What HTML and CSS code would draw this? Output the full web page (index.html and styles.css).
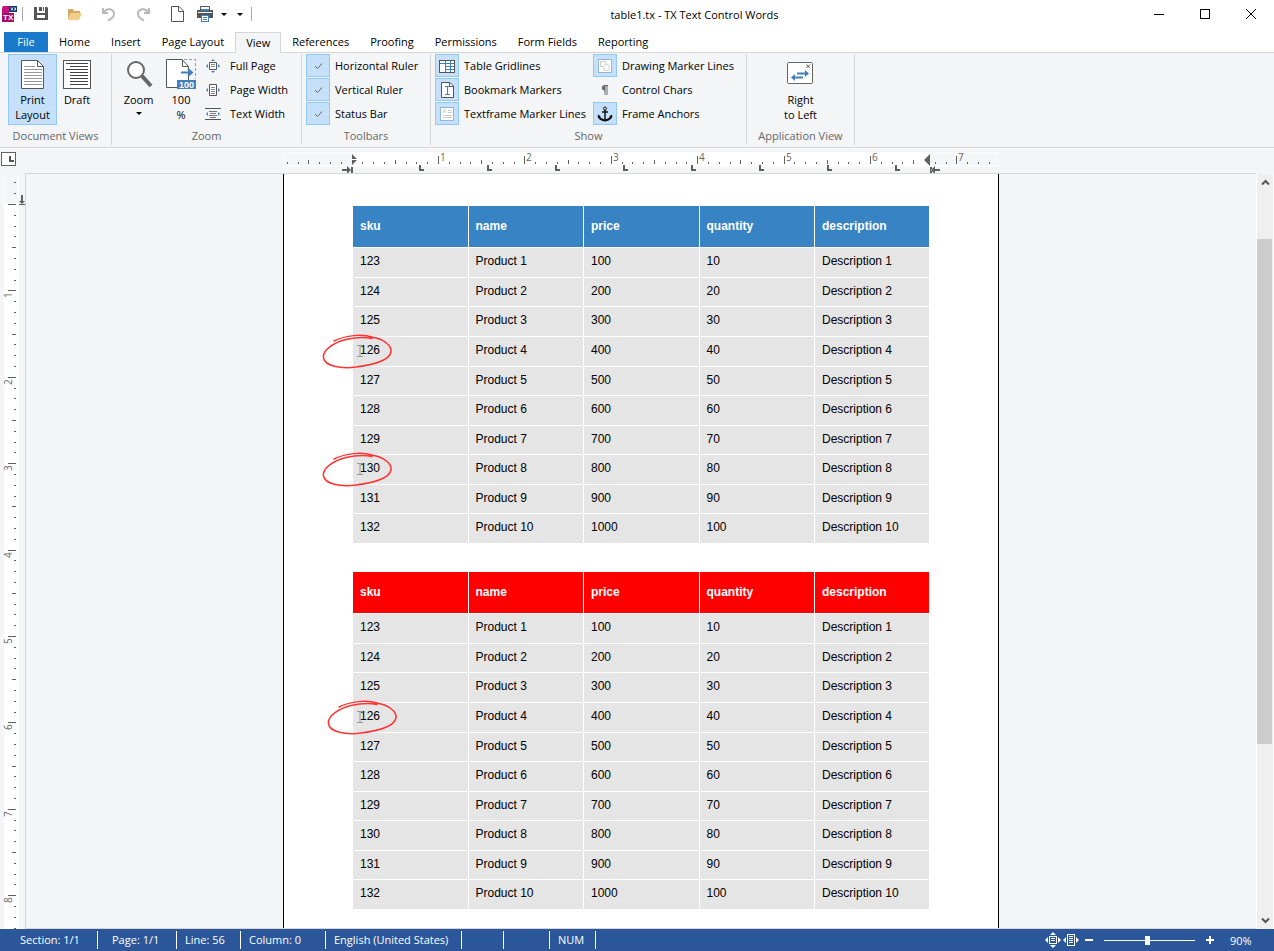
FILE: index.html
```
<!DOCTYPE html>
<html lang="en">

<head>
  <meta charset="UTF-8" />
  <meta name="viewport" content="width=device-width, initial-scale=1.0" />
  <title>table1.tx - TX Text Control Words</title>
  <link rel="stylesheet" href="styles.css">
</head>

<body>
  <header class="titlebar">
    <div class="quick-access">
      <svg class="app-icon" width="18" height="18" viewBox="0 0 18 18">
        <path d="M3 1H9V8H14V17H2V3Z" fill="#c4127f" />
        <path d="M2 8H14L12 17H2Z" fill="#a50d6b" />
        <rect x="9" y="1" width="8" height="6" fill="#14386b" />
        <path d="M11 2.500l2 3M13 2.500l-2 3M14 3h1.500v2H14" stroke="#fff" fill="none" stroke-width=".8" />
        <text x="3" y="15" class="app-icon-text">TX</text>
      </svg>
      <span class="divider"></span>
      <button class="quick" aria-label="Save">
        <svg width="16" height="16" viewBox="0 0 16 16">
          <path d="M1 1H4V7H12V1H14L15 2V14H1Z" fill="#555" />
          <path d="M6 1H9V5H6ZM10 1H11V5H10Z" fill="#555" />
          <path d="M4 9H12V12H4Z" fill="#fff" />
        </svg>
      </button>
      <button class="quick" aria-label="Open">
        <svg width="16" height="16" viewBox="0 0 16 16">
          <path d="M1 13V3H6L7 5H13V7H4Z" fill="#d3a963" />
          <path d="M4 7H15L12 14H1Z" fill="#f3cd85" />
        </svg>
      </button>
      <button class="quick" aria-label="Undo">
        <svg width="16" height="16" viewBox="0 0 16 16" fill="none" stroke="#b9b9b9" stroke-width="2">
          <path d="M2 2V7H7" />
          <path d="M2.500 6.500C6 1 13 3 13 8C13 11 10 13 7 14.500" />
        </svg>
      </button>
      <button class="quick" aria-label="Redo">
        <svg width="16" height="16" viewBox="0 0 16 16" fill="none" stroke="#b9b9b9" stroke-width="2">
          <path d="M14 2V7H9" />
          <path d="M13.500 6.500C10 1 3 3 3 8C3 11 6 13 9 14.500" />
        </svg>
      </button>
      <button class="quick" aria-label="New">
        <svg width="14" height="18" viewBox="0 0 14 18" fill="#fff" stroke="#555">
          <path d="M1.500 1.500H9L13.500 6V16.500H1.500Z" />
          <path d="M8.500 1.500V6.500H13.500" fill="none" />
        </svg>
      </button>
      <button class="quick quick-print" aria-label="Print">
        <svg width="18" height="18" viewBox="0 0 18 18">
          <path d="M4.500 5V1.500H13.500V5" fill="#fff" stroke="#555" />
          <rect x="1" y="5" width="16" height="8" fill="#555" />
          <rect x="2" y="7" width="14" height="1" fill="#fff" />
          <rect x="5" y="4" width="8" height="2" fill="#4180bd" />
          <rect x="5.500" y="10.500" width="7" height="6" fill="#fff" stroke="#4180bd" />
          <path d="M7 12.500H11M7 14.500H11" stroke="#4180bd" />
        </svg>
      </button>
      <button class="quick quick-caret" aria-label="Print options"><span class="caret"></span></button>
      <button class="quick quick-caret" aria-label="Customize toolbar"><span class="caret"></span></button>
      <span class="divider"></span>
    </div>
    <div class="title">table1.tx - TX Text Control Words</div>
    <div class="window-buttons">
      <button aria-label="Minimize"><svg width="12" height="12"><path d="M1 6.500H11" stroke="#000" /></svg></button>
      <button aria-label="Maximize"><svg width="12" height="12"><rect x="1.500" y="1.500" width="9" height="9" fill="none" stroke="#000" /></svg></button>
      <button aria-label="Close"><svg width="12" height="12"><path d="M1 1L11 11M11 1L1 11" stroke="#000" /></svg></button>
    </div>
  </header>

  <nav class="tabs">
    <a href="#" class="tab tab-file">File</a>
    <a href="#" class="tab">Home</a>
    <a href="#" class="tab">Insert</a>
    <a href="#" class="tab">Page Layout</a>
    <a href="#" class="tab tab-active">View</a>
    <a href="#" class="tab">References</a>
    <a href="#" class="tab">Proofing</a>
    <a href="#" class="tab">Permissions</a>
    <a href="#" class="tab">Form Fields</a>
    <a href="#" class="tab">Reporting</a>
  </nav>

  <div class="ribbon">
    <section class="group group-views">
      <div class="group-body">
        <button class="big pressed">
          <svg width="30" height="29" viewBox="0 0 30 29">
            <path d="M3.500 .5H19.500L25.500 6.500V28.500H3.500Z" fill="#fff" stroke="#555" />
            <path d="M19.500 .5V6.500H25.500" fill="none" stroke="#555" />
            <path d="M6 6.500H17M6 9.500H24M6 12.500H24M6 15.500H24M6 18.500H24M6 21.500H24M6 24.500H24" stroke="#999" />
          </svg>
          <span>Print<br>Layout</span>
        </button>
        <button class="big big-draft">
          <svg width="28" height="29" viewBox="0 0 28 29">
            <rect x=".5" y=".5" width="27" height="28" fill="#fff" stroke="#555" />
            <path d="M3 3.500H25M7 6.500H25M3 9.500H25M7 12.500H25M7 15.500H25M7 18.500H25M7 21.500H25M7 24.500H25" stroke="#444" />
          </svg>
          <span>Draft</span>
        </button>
      </div>
      <h2>Document Views</h2>
    </section>

    <section class="group group-zoom">
      <div class="group-body">
        <button class="big">
          <svg width="28" height="29" viewBox="0 0 28 29">
            <circle cx="11" cy="10" r="8" fill="#fff" stroke="#666" stroke-width="2" />
            <path d="M17 16L26 26" stroke="#666" stroke-width="4" />
          </svg>
          <span>Zoom</span>
          <span class="caret"></span>
        </button>
        <button class="big big-hundred">
          <svg width="30" height="31" viewBox="0 0 30 31">
            <path d="M.5 .5H16L22.500 7.500V28.500H.5Z" fill="#fff" stroke="#555" />
            <path d="M16.500 .5V7.500H22.500" fill="none" stroke="#555" />
            <path d="M18 .5H29.500V20" fill="none" stroke="#999" stroke-dasharray="3 2" />
            <path d="M15 13.500H25M22 10L26 13.500L22 17" fill="none" stroke="#4180bd" stroke-width="2" />
            <rect x="11" y="21" width="19" height="9" fill="#4180bd" />
            <text x="13" y="29" class="hundred-text">100</text>
          </svg>
          <span>100<br>%</span>
        </button>
        <div class="stack">
          <button class="small">
            <svg width="16" height="16" viewBox="0 0 16 16">
              <path d="M4.500 4.500H11.500V11.500H4.500Z" fill="#fff" stroke="#555" />
              <path d="M6 6.500H10M6 8.500H10" stroke="#888" />
              <path d="M8 1L10 3H6ZM8 15L10 13H6ZM1 8L3 6V10ZM15 8L13 6V10Z" fill="#4180bd" />
            </svg>
            Full Page
          </button>
          <button class="small">
            <svg width="16" height="16" viewBox="0 0 16 16">
              <path d="M4.500 2.500H11.500V13.500H4.500Z" fill="#fff" stroke="#555" />
              <path d="M6 5.500H10M6 7.500H10M6 9.500H10M6 11.500H10" stroke="#888" />
              <path d="M1 8L3 6V10ZM15 8L13 6V10Z" fill="#4180bd" />
            </svg>
            Page Width
          </button>
          <button class="small">
            <svg width="16" height="16" viewBox="0 0 16 16">
              <path d="M0 2.500H16M0 13.500H16" stroke="#555" />
              <path d="M4 5.500H12M5 7.500H11M4 9.500H12M5 11.500H11" stroke="#777" />
              <path d="M1 8L3 6V10ZM15 8L13 6V10Z" fill="#4180bd" />
            </svg>
            Text Width
          </button>
        </div>
      </div>
      <h2>Zoom</h2>
    </section>

    <section class="group group-toolbars">
      <div class="group-body">
        <div class="stack">
          <label class="toggle">
            <input type="checkbox" checked>
            <svg width="16" height="16"><path d="M5 8L7.500 10.500L12 5.500" fill="none" stroke="#666" /></svg>
            Horizontal Ruler
          </label>
          <label class="toggle">
            <input type="checkbox" checked>
            <svg width="16" height="16"><path d="M5 8L7.500 10.500L12 5.500" fill="none" stroke="#666" /></svg>
            Vertical Ruler
          </label>
          <label class="toggle">
            <input type="checkbox" checked>
            <svg width="16" height="16"><path d="M5 8L7.500 10.500L12 5.500" fill="none" stroke="#666" /></svg>
            Status Bar
          </label>
        </div>
      </div>
      <h2>Toolbars</h2>
    </section>

    <section class="group group-show">
      <div class="group-body">
        <div class="stack">
          <label class="toggle">
            <input type="checkbox" checked>
            <svg width="16" height="16" viewBox="0 0 16 16">
              <rect x=".5" y="2.500" width="15" height="12" fill="#fff" stroke="#555" />
              <path d="M1 5.500H15M6.500 3V14M11.500 3V14M6 8.500H15M6 11.500H15" stroke="#4180bd" />
            </svg>
            Table Gridlines
          </label>
          <label class="toggle">
            <input type="checkbox" checked>
            <svg width="16" height="16" viewBox="0 0 16 16">
              <path d="M2.500 .5H11L14.500 4V15.500H2.500Z" fill="#fff" stroke="#555" />
              <path d="M10.500 .5V4.500H14" fill="none" stroke="#555" />
              <path d="M6 4.500H11M6 12.500H11M8.500 4V13" stroke="#4180bd" />
            </svg>
            Bookmark Markers
          </label>
          <label class="toggle">
            <input type="checkbox" checked>
            <svg width="16" height="16" viewBox="0 0 16 16">
              <rect x="1.500" y="1.500" width="13" height="13" fill="#fff" stroke="#4180bd" stroke-dasharray="1 1" />
              <path d="M4 7L5.500 3L7 7M9 4.500H13M9 6.500H13M4 9.500H13M4 11.500H13" fill="none" stroke="#ccc" />
            </svg>
            Textframe Marker Lines
          </label>
        </div>
        <div class="stack">
          <label class="toggle">
            <input type="checkbox" checked>
            <svg width="16" height="16" viewBox="0 0 16 16">
              <rect x="1.500" y="1.500" width="13" height="13" fill="#fff" stroke="#4180bd" stroke-dasharray="1 1" />
              <path d="M9 3.500H3.500V8.500H6" fill="none" stroke="#ccc" />
              <path d="M9 3.500V6" stroke="#ccc" />
              <circle cx="9.500" cy="9.500" r="3" fill="none" stroke="#ccc" />
            </svg>
            Drawing Marker Lines
          </label>
          <label class="toggle">
            <input type="checkbox">
            <svg width="16" height="16" viewBox="0 0 16 16">
              <path d="M8 3H11V4H10.500V13H9.500V4H8.500V13H7.500V8.500C4 8.500 4 3 8 3Z" fill="#666" />
            </svg>
            Control Chars
          </label>
          <label class="toggle">
            <input type="checkbox" checked>
            <svg width="16" height="16" viewBox="0 0 16 16" fill="none" stroke="#111">
              <circle cx="8" cy="2.500" r="1.500" />
              <path d="M5 6H11M8 4V15" stroke-width="1.500" />
              <path d="M1.500 9.500C2 13 5 14 8 14.500C11 14 14 13 14.500 9.500" stroke-width="2" />
              <path d="M1 12V8.500L4 11ZM15 12V8.500L12 11Z" fill="#111" stroke="none" />
            </svg>
            Frame Anchors
          </label>
        </div>
      </div>
      <h2>Show</h2>
    </section>

    <section class="group group-appview">
      <div class="group-body">
        <button class="big">
          <svg width="28" height="29" viewBox="0 0 28 29">
            <rect x=".5" y="2.500" width="25" height="21" rx="1" fill="#fff" stroke="#666" />
            <path d="M19.500 4.500L23 8M23 4.500L19.500 8" stroke="#555" />
            <path d="M10 13.500H20M6 17.500H16" stroke="#4180bd" stroke-width="2" />
            <path d="M18 10V17L22 13.500ZM8 14V21L4 17.500Z" fill="#4180bd" />
          </svg>
          <span>Right<br>to Left</span>
        </button>
      </div>
      <h2>Application View</h2>
    </section>
  </div>

  <div class="ruler-row">
    <button class="tab-type" aria-label="Tab type">
      <svg width="13" height="11"><path d="M7 2H9V6H12V8H7Z" fill="#555" /></svg>
    </button>
    <svg class="ruler-h" id="rulerH" width="714" height="24">
      <rect class="ruler-margin" x="0" y="4" width="714" height="13" />
      <rect class="ruler-area" x="69" y="3" width="576" height="15" />
      <!-- indent markers -->
      <path class="mark" d="M68 5L73 10H68ZM68 11H73L68 16Z" />
      <path class="mark" d="M646 5V17L640 11Z" />
      <path class="mark" d="M58 20H63V17L67 21L63 25V22H58ZM67 18H69V24H67Z" />
      <path class="mark" d="M656 20H651V17L647 21L651 25V22H656ZM646 18H648V24H646Z" />
    </svg>
  </div>

  <main class="workspace">
    <svg class="ruler-v" id="rulerV" width="25" height="100%">
      <rect class="ruler-margin" x="4" y="0" width="14" height="30" />
      <rect class="ruler-area" x="4" y="30" width="15" height="100%" />
      <path class="mark" d="M21 21H23V27H25L22 30L19 27H21ZM19 30H25V31H19Z" />
    </svg>

    <div class="canvas">
      <div class="page">
        <table class="products">
          <thead>
            <tr><th>sku</th><th>name</th><th>price</th><th>quantity</th><th>description</th></tr>
          </thead>
          <tbody>
            <tr><td>123</td><td>Product 1</td><td>100</td><td>10</td><td>Description 1</td></tr>
            <tr><td>124</td><td>Product 2</td><td>200</td><td>20</td><td>Description 2</td></tr>
            <tr><td>125</td><td>Product 3</td><td>300</td><td>30</td><td>Description 3</td></tr>
            <tr>
              <td>126
                <svg class="circled" width="76" height="40"><use href="#pen" /></svg>
                <svg class="ibeam" width="6" height="13"><use href="#cursor" /></svg>
              </td>
              <td>Product 4</td><td>400</td><td>40</td><td>Description 4</td>
            </tr>
            <tr><td>127</td><td>Product 5</td><td>500</td><td>50</td><td>Description 5</td></tr>
            <tr><td>128</td><td>Product 6</td><td>600</td><td>60</td><td>Description 6</td></tr>
            <tr><td>129</td><td>Product 7</td><td>700</td><td>70</td><td>Description 7</td></tr>
            <tr>
              <td>130
                <svg class="circled" width="76" height="40"><use href="#pen" /></svg>
                <svg class="ibeam" width="6" height="13"><use href="#cursor" /></svg>
              </td>
              <td>Product 8</td><td>800</td><td>80</td><td>Description 8</td>
            </tr>
            <tr><td>131</td><td>Product 9</td><td>900</td><td>90</td><td>Description 9</td></tr>
            <tr><td>132</td><td>Product 10</td><td>1000</td><td>100</td><td>Description 10</td></tr>
          </tbody>
        </table>

        <table class="products products-red">
          <thead>
            <tr><th>sku</th><th>name</th><th>price</th><th>quantity</th><th>description</th></tr>
          </thead>
          <tbody>
            <tr><td>123</td><td>Product 1</td><td>100</td><td>10</td><td>Description 1</td></tr>
            <tr><td>124</td><td>Product 2</td><td>200</td><td>20</td><td>Description 2</td></tr>
            <tr><td>125</td><td>Product 3</td><td>300</td><td>30</td><td>Description 3</td></tr>
            <tr>
              <td>126
                <svg class="circled" width="76" height="40"><use href="#pen" /></svg>
                <svg class="ibeam" width="6" height="13"><use href="#cursor" /></svg>
              </td>
              <td>Product 4</td><td>400</td><td>40</td><td>Description 4</td>
            </tr>
            <tr><td>127</td><td>Product 5</td><td>500</td><td>50</td><td>Description 5</td></tr>
            <tr><td>128</td><td>Product 6</td><td>600</td><td>60</td><td>Description 6</td></tr>
            <tr><td>129</td><td>Product 7</td><td>700</td><td>70</td><td>Description 7</td></tr>
            <tr><td>130</td><td>Product 8</td><td>800</td><td>80</td><td>Description 8</td></tr>
            <tr><td>131</td><td>Product 9</td><td>900</td><td>90</td><td>Description 9</td></tr>
            <tr><td>132</td><td>Product 10</td><td>1000</td><td>100</td><td>Description 10</td></tr>
          </tbody>
        </table>
      </div>
    </div>

    <div class="scrollbar">
      <button aria-label="Scroll up"><svg width="9" height="7"><path d="M1 5.500L4.500 2L8 5.500" fill="none" stroke="#555" stroke-width="2" /></svg></button>
      <div class="track"><div class="thumb"></div></div>
      <button aria-label="Scroll down"><svg width="9" height="7"><path d="M1 1.500L4.500 5L8 1.500" fill="none" stroke="#555" stroke-width="2" /></svg></button>
    </div>
  </main>

  <footer class="statusbar">
    <span class="cell cell-section">Section: 1/1</span>
    <span class="cell cell-page">Page: 1/1</span>
    <span class="cell cell-line">Line: 56</span>
    <span class="cell cell-column">Column: 0</span>
    <span class="cell cell-language">English (United States)</span>
    <span class="cell cell-overwrite"></span>
    <span class="cell cell-caps"></span>
    <span class="cell cell-num">NUM</span>
    <div class="zoom-controls">
      <button aria-label="Full page">
        <svg width="16" height="16" viewBox="0 0 16 16" fill="none" stroke="#fff">
          <rect x="4.500" y="4.500" width="7" height="7" />
          <path d="M6 6.500H10M6 8.500H10" />
          <path d="M8 0L11 3H5ZM8 16L11 13H5ZM0 8L3 5V11ZM16 8L13 5V11Z" fill="#fff" stroke="none" />
        </svg>
      </button>
      <button aria-label="Page width">
        <svg width="16" height="16" viewBox="0 0 16 16" fill="none" stroke="#fff">
          <rect x="4.500" y="2.500" width="7" height="11" />
          <path d="M6 4.500H10M6 6.500H10M6 8.500H10M6 10.500H10" />
          <path d="M0 8L3 5V11ZM16 8L13 5V11Z" fill="#fff" stroke="none" />
        </svg>
      </button>
      <button class="step" aria-label="Zoom out"><svg width="8" height="8"><path d="M0 4H8" stroke="#fff" stroke-width="2" /></svg></button>
      <input type="range" min="0" max="100" value="48" aria-label="Zoom">
      <button class="step" aria-label="Zoom in"><svg width="8" height="8"><path d="M0 4H8M4 0V8" stroke="#fff" stroke-width="2" /></svg></button>
      <span class="zoom-value">90%</span>
    </div>
  </footer>

  <!-- red pen circle and text cursor -->
  <svg width="0" height="0" class="defs">
    <symbol id="pen" viewBox="0 0 76 40">
      <path d="M12 7C24 1 40 0 50 3C62 5 70 12 69 18C67 27 50 31 34 33C18 35 3 32 1.500 24C0 16 13 8 24 5.500C33 3.500 42 3 50 4.500" fill="none" stroke="#f33" stroke-width="1.500" stroke-linecap="round" />
    </symbol>
    <symbol id="cursor" viewBox="0 0 6 13">
      <path d="M0 .5H6M0 11.500H6M3 1V11" fill="none" stroke="#999" />
    </symbol>
  </svg>

  <script src="script.js"></script>
</body>

</html>
```

FILE: styles.css
```
:root {
  --panel: #f4f5f7;
  --line: #d6d6d8;
  --pressed: #c5e0f8;
  --pressed-line: #90c8f6;
  --mark: #606060;
}

* {
  box-sizing: border-box;
}

body {
  margin: 0;
  height: 100vh;
  display: flex;
  flex-direction: column;
  overflow: hidden;
  background-color: var(--panel);
  font-family: "Open Sans", "Noto Sans", sans-serif;
  font-size: 11px;
  line-height: 15px;
  color: #000;
}

button {
  padding: 0;
  border: 0;
  background: none;
  font: inherit;
  color: inherit;
}

svg {
  display: block;
  flex: none;
}

.defs {
  position: absolute;
}

.caret {
  border: 3px solid transparent;
  border-top-color: #000;
  border-bottom: 0;
}

/* ---- Title bar ---- */
.titlebar {
  display: flex;
  height: 28px;
  background-color: #fff;
}

.quick-access {
  display: flex;
  align-items: center;
}

.app-icon {
  margin-right: 4px;
}

.app-icon-text {
  font: bold 8px "Liberation Sans", sans-serif;
  fill: #fff;
}

.divider {
  width: 1px;
  height: 14px;
  margin-right: 1px;
  background-color: #aaa;
}

.quick {
  display: flex;
  justify-content: center;
  width: 34px;
}

.quick-print {
  width: 22px;
}

.quick-caret {
  width: 16px;
}

.quick-caret + .divider {
  margin-left: 3px;
}

.title {
  flex: 1;
  text-align: center;
  line-height: 30px;
}

.window-buttons {
  display: flex;
}

.window-buttons button {
  display: flex;
  align-items: center;
  justify-content: center;
  width: 46px;
}

/* ---- Tabs ---- */
.tabs {
  display: flex;
  align-items: flex-end;
  gap: 1px;
  height: 25px;
  padding-left: 4px;
  background-color: #fff;
  border-bottom: 1px solid var(--line);
}

.tab {
  padding: 0 10px;
  line-height: 20px;
  color: #000;
  text-decoration: none;
}

.tab-file {
  width: 44px;
  padding: 0;
  background-color: #1979ca;
  color: #fff;
  text-align: center;
}

.tab-active {
  margin-bottom: -1px;
  border: 1px solid var(--line);
  border-bottom: 0;
  background-color: var(--panel);
}

/* ---- Ribbon ---- */
.ribbon {
  display: flex;
  height: 95px;
  padding-top: 1px;
  border-bottom: 1px solid var(--line);
}

.group {
  height: 91px;
  border-right: 1px solid var(--line);
}

.group h2 {
  margin: 0;
  font-size: 11px;
  font-weight: normal;
  line-height: 21px;
  text-align: center;
  color: #666;
}

.group-body {
  display: flex;
  height: 71px;
}

.group-views {
  width: 112px;
}

.group-views .group-body {
  padding-left: 8px;
}

.group-zoom {
  width: 190px;
}

.group-zoom .group-body {
  padding-left: 2px;
}

.group-toolbars {
  width: 129px;
}

.group-toolbars .group-body {
  padding-left: 4px;
}

.group-show {
  width: 316px;
}

.group-show .group-body {
  display: grid;
  grid-template-columns: 158px auto;
  justify-content: start;
  padding-left: 4px;
}

.group-appview {
  width: 108px;
}

.group-appview .group-body {
  justify-content: center;
}

.big {
  display: flex;
  flex-direction: column;
  align-items: center;
  width: 49px;
  padding-top: 4px;
  border: 1px solid transparent;
}

.big svg {
  height: 31px;
  margin-bottom: 2px;
  overflow: visible;
}

.big .caret {
  margin-top: 5px;
}

.big-draft {
  width: 40px;
}

.big-hundred {
  width: 36px;
}

.hundred-text {
  font: bold 9px "Liberation Sans", sans-serif;
  fill: #fff;
}

.pressed {
  background-color: var(--pressed);
  border-color: var(--pressed-line);
}

.stack {
  display: flex;
  flex-direction: column;
  gap: 1px;
}

.small {
  display: flex;
  align-items: center;
  gap: 9px;
  height: 23px;
  padding-left: 6px;
  white-space: nowrap;
}

.toggle {
  display: grid;
  grid-template-columns: 24px auto;
  align-items: center;
  column-gap: 5px;
  height: 23px;
  white-space: nowrap;
}

.toggle input {
  grid-area: 1 / 1;
  width: 24px;
  height: 23px;
  margin: 0;
  appearance: none;
}

.toggle input:checked {
  background-color: var(--pressed);
  border: 1px solid var(--pressed-line);
}

.toggle svg {
  grid-area: 1 / 1;
  justify-self: center;
}

/* ---- Rulers ---- */
.ruler-row {
  display: grid;
  grid-template-columns: 26px 1fr 18px;
  height: 26px;
  border-top: 1px solid #fff;
}

.ruler-h {
  justify-self: center;
}

.tab-type {
  width: 15px;
  height: 14px;
  margin: 3px 0 0 1px;
  border: 1px solid var(--mark);
  background-color: #fff;
}

.ruler-area {
  fill: #fff;
}

.ruler-margin {
  fill: var(--panel);
  stroke: #fff;
}

.mark {
  fill: var(--mark);
}

.ruler-label {
  font-size: 10px;
  fill: #666;
}

/* ---- Document ---- */
.workspace {
  flex: 1;
  display: grid;
  grid-template-columns: 25px 1fr 18px;
  min-height: 0;
}

.canvas {
  display: flex;
  justify-content: center;
  margin-top: -1px;
  overflow: hidden;
  border: 1px solid var(--line);
  border-right: 0;
}

.page {
  width: 716px;
  padding: 32px 69px 0;
  border: 1px solid #000;
  border-width: 0 1px;
  background-color: #fff;
}

.products {
  width: 577px;
  margin-bottom: 28px;
  border-spacing: 0;
  table-layout: fixed;
  font-family: "Liberation Sans", sans-serif;
  font-size: 12px;
  line-height: 14px;
}

.products th,
.products td {
  position: relative;
  height: 30px;
  padding: 6px 7px 0;
  border: 1px solid #fff;
  border-width: 0 1px 1px 0;
  background-color: #e5e5e5;
  text-align: left;
  vertical-align: top;
}

.products th {
  height: 42px;
  padding-top: 13px;
  background-color: #3883c4;
  color: #fff;
}

.products th:last-child {
  width: 115px;
}

/* rows are 29.6 px on screen at 90%, rounded down here and there */
.products tr:nth-child(2) td,
.products tr:nth-child(2n+5) td {
  height: 29px;
}

.products-red th {
  background-color: #f00;
}

.circled {
  position: absolute;
  left: -31px;
  top: -3px;
  z-index: 1;
}

.products-red .circled {
  left: -26px;
}

.ibeam {
  position: absolute;
  left: 4px;
  top: 8px;
}

/* ---- Scrollbar ---- */
.scrollbar {
  display: flex;
  flex-direction: column;
  border: solid #fff;
  border-width: 0 1px;
  background-color: #efefef;
}

.scrollbar button {
  display: flex;
  align-items: center;
  justify-content: center;
  height: 17px;
}

.track {
  flex: 1;
  padding-top: 48px;
}

.thumb {
  width: 15px;
  height: 75%;
  background-color: #cdcdcd;
}

/* ---- Status bar ---- */
.statusbar {
  display: flex;
  align-items: center;
  height: 22px;
  background-color: #2b579a;
  color: #fff;
}

.cell {
  height: 18px;
  padding-left: 8px;
  border-right: 1px solid #fff;
  line-height: 18px;
  white-space: nowrap;
}

.cell-section {
  width: 98px;
  padding-left: 20px;
}

.cell-page {
  width: 79px;
  padding-left: 14px;
}

.cell-line {
  width: 64px;
}

.cell-column {
  width: 85px;
}

.cell-language {
  width: 136px;
}

.cell-overwrite {
  width: 42px;
}

.cell-caps,
.cell-num {
  width: 46px;
}

.zoom-controls {
  display: flex;
  align-items: center;
  gap: 2px;
  margin-left: auto;
  padding-right: 20px;
}

.zoom-controls input {
  width: 91px;
  height: 16px;
  margin: 0 5px;
  appearance: none;
  background: linear-gradient(#fff, #fff) center / 100% 1px no-repeat;
}

.zoom-controls input::-webkit-slider-thumb {
  appearance: none;
  width: 5px;
  height: 9px;
  background-color: #fff;
}

.step {
  padding: 0 4px;
}

.zoom-value {
  width: 24px;
  margin-left: 10px;
}
```

FILE: script.js
```
const SVG = 'http://www.w3.org/2000/svg';
const inch = 86.4; // one inch at 90% zoom
const rulerH = document.getElementById('rulerH');
const rulerV = document.getElementById('rulerV');

function addRect(parent, x, y, w, h) {
  const rect = document.createElementNS(SVG, 'rect');
  rect.setAttribute('class', 'mark');
  rect.setAttribute('x', x);
  rect.setAttribute('y', y);
  rect.setAttribute('width', w);
  rect.setAttribute('height', h);
  parent.appendChild(rect);
}

function addLabel(parent, text, x, y, rotate) {
  const label = document.createElementNS(SVG, 'text');
  label.setAttribute('class', 'ruler-label');
  label.setAttribute('transform', `translate(${x} ${y}) rotate(${rotate})`);
  label.textContent = text;
  parent.appendChild(label);
}

function tickSize(i) {
  if (i % 8 === 0) return 8;
  return i % 4 === 0 ? 4 : 2;
}

// horizontal ruler, ticks every 1/8 inch
for (let i = -6; i <= 59; i++) {
  if (i === 0 || i === 53) continue;
  const x = Math.floor(68 + i * inch / 8);
  const size = tickSize(i);
  addRect(rulerH, x, 15 - size, 1, size);
  if (i % 8 === 0) addLabel(rulerH, i / 8, x + 2, 12, 0);
}

// default tab stops
for (let x = 135; x < 640; x += 68) {
  addRect(rulerH, x, 16, 2, 6);
  addRect(rulerH, x, 20, 5, 2);
}

// vertical ruler, down to the bottom of the window
const height = rulerV.getBoundingClientRect().height;
for (let i = -2; 30 + i * inch / 8 < height; i++) {
  const y = Math.floor(30.4 + i * inch / 8);
  const size = tickSize(i);
  addRect(rulerV, 16 - size, y, size, 1);
  if (i > 0 && i % 8 === 0) addLabel(rulerV, i / 8, 12, y + 8, -90);
}
```
